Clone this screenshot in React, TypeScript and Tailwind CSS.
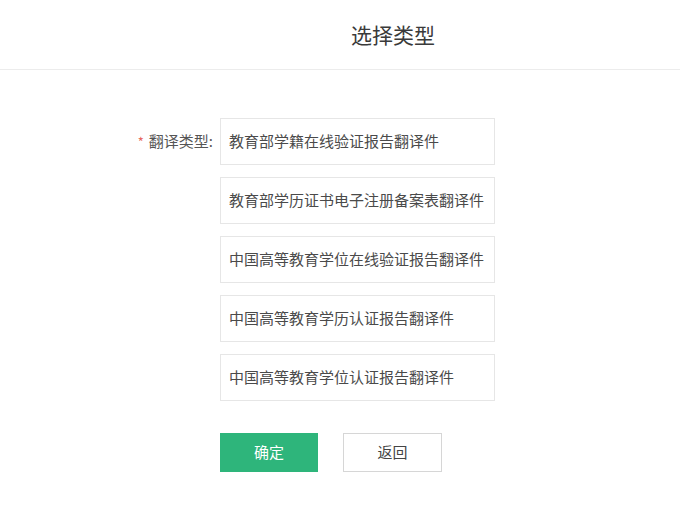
import React from "react";

const types = [
  "教育部学籍在线验证报告翻译件",
  "教育部学历证书电子注册备案表翻译件",
  "中国高等教育学位在线验证报告翻译件",
  "中国高等教育学历认证报告翻译件",
  "中国高等教育学位认证报告翻译件",
];

const App = () => {
  return (
    <div
      className="w-[680px] h-[509px] bg-white text-[#444]"
      style={{ fontFamily: '"Noto Sans CJK SC", "Noto Sans", sans-serif' }}
    >
      <div className="h-[70px] flex items-center justify-center pl-[106px] border-b border-[#ececec]">
        <h1 className="text-[21px] text-[#3a3a3a]">选择类型</h1>
      </div>

      <div className="pt-[48px] flex">
        <div className="w-[220px] pr-[7px] flex justify-end">
          <div className="h-[47px] flex items-center text-[15px] text-[#555]">
            <span className="text-[#e8685f] mr-[5px] text-[13px]">*</span>
            翻译类型:
          </div>
        </div>
        <div className="flex flex-col gap-[12px]">
          {types.map((t) => (
            <div
              key={t}
              className="w-[275px] h-[47px] border border-[#e6e6e6] flex items-center pl-[8px] text-[15px] text-[#4a4a4a]"
            >
              {t}
            </div>
          ))}
          <div className="flex gap-[25px] mt-[20px]">
            <button className="w-[98px] h-[39px] bg-[#2eb57b] text-white text-[15px]">
              确定
            </button>
            <button className="w-[99px] h-[39px] bg-white border border-[#d6d6d6] text-[#444] text-[15px]">
              返回
            </button>
          </div>
        </div>
      </div>
    </div>
  );
};

export default App;
